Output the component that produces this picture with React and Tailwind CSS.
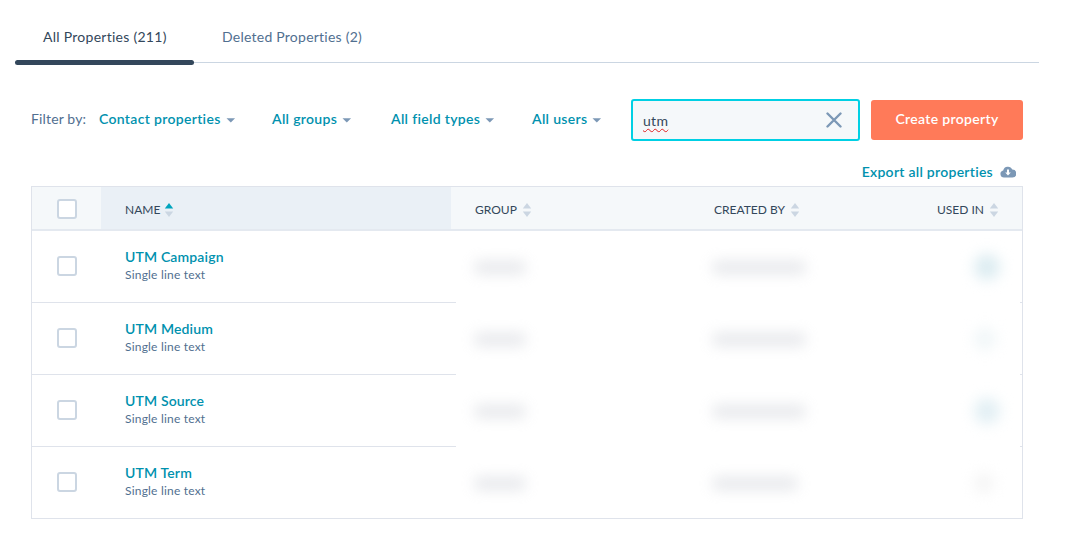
function Caret() {
  return (
    <svg width="10" height="5" viewBox="0 0 10 5" className="ml-[5px] mt-[3px] shrink-0">
      <path d="M0.5 0.2h8.6L4.8 4.6z" fill="#7c98b6" />
    </svg>
  );
}

function Sort({ active }) {
  return (
    <svg width="10" height="16" viewBox="0 0 10 16" className="shrink-0">
      <path d="M5 1l4.2 5.5H.8z" fill={active ? "#00a4bd" : "#cbd6e2"} />
      <path d="M5 15L.8 9.5h8.4z" fill="#cbd6e2" />
    </svg>
  );
}

function Check() {
  return <div className="w-5 h-5 rounded-[3px] border-2 border-[#cbd6e2] bg-white shrink-0 mb-px" />;
}

function Filter({ label, className }) {
  return (
    <div className={"flex items-center text-[14px] font-semibold tracking-[0.32px] text-[#0091ae] pb-[3px] " + className}>
      <span>{label}</span>
      <Caret />
    </div>
  );
}

function Row({ name, creatorW, usedColor, usedSize, last }) {
  return (
    <div className="flex h-[72px]">
      <div className={"w-[424px] shrink-0 flex items-center border-b " + (last ? "border-transparent" : "border-[#dfe3eb]")}>
        <div className="w-[70px] pl-[25px]"><Check /></div>
        <div className="pl-[23px] pb-[3px]">
          <div className="text-[14px] leading-[20px] font-semibold tracking-[0.15px] text-[#0091ae]">{name}</div>
          <div className="text-[12px] leading-[16px] tracking-[0.2px] text-[#516f90]">Single line text</div>
        </div>
      </div>
      <div className="flex-1 flex items-center">
        <div className="w-[257px] pl-[19px]">
          <div className="w-[50px] h-[13px] bg-[#c9ccd4] opacity-45 blur-[7px]" />
        </div>
        <div className="flex-1"><div className="h-[13px] bg-[#c9ccd4] opacity-45 blur-[7px]" style={{ width: creatorW }} /></div>
        <div className="w-[46px] flex">
          <div className="rounded-full blur-[7px]" style={{ width: usedSize, height: usedSize, background: usedColor }} />
        </div>
      </div>
      <div className={"w-[2px] shrink-0 border-b " + (last ? "border-transparent" : "border-[#dfe3eb]")} />
    </div>
  );
}

export default function App() {
  return (
    <div className="w-[1068px] h-[552px] bg-white overflow-hidden text-[#33475b] font-['Lato','Open_Sans',sans-serif]">
      <div className="pl-[15px] w-[1039px] pt-[27px]">
        <div className="flex h-[36px] border-b border-[#cbd6e2] relative">
          <div className="w-[179px] pl-[28px] text-[14px] leading-[20px] tracking-[0.27px] text-[#33475b]">All Properties (211)</div>
          <div className="pl-[28px] text-[14px] leading-[20px] tracking-[0.24px] text-[#516f90]">Deleted Properties (2)</div>
          <div className="absolute left-0 -bottom-[3px] w-[179px] h-[5px] rounded-[3px] bg-[#33475b]" />
        </div>
      </div>

      <div className="flex items-center pl-[31px] mt-[36px] h-[42px]">
        <span className="text-[14px] tracking-[0.15px] text-[#516f90] w-[68px] pb-[3px]">Filter by:</span>
        <Filter label="Contact properties" className="w-[173px]" />
        <Filter label="All groups" className="w-[119px]" />
        <Filter label="All field types" className="w-[141px]" />
        <Filter label="All users" className="w-[99px]" />
        <div className="w-[229px] h-[42px] rounded-[3px] border-2 border-[#00d0e4] bg-[#f5f8fa] flex items-center pl-[10px] pr-[16px] justify-between">
          <span className="text-[14px] tracking-[0.3px] text-[#33475b] underline decoration-wavy decoration-[#e02020] decoration-1 underline-offset-2">utm</span>
          <svg width="16" height="16" viewBox="0 0 16 16"><path d="M1.5 1.5l13 13M14.5 1.5l-13 13" stroke="#7c98b6" strokeWidth="2.4" strokeLinecap="round" /></svg>
        </div>
        <div className="ml-[11px] w-[152px] h-10 rounded-[3px] bg-[#ff7a59] text-white text-[14px] font-semibold tracking-[0.32px] flex items-center justify-center pb-[3px]">Create property</div>
      </div>

      <div className="w-[1016px] flex justify-end items-center h-5 mt-[20px] text-[14px] font-semibold tracking-[0.27px] text-[#0091ae]">
        <span>Export all properties</span>
        <svg width="16" height="13" viewBox="0 0 16 13" className="ml-[7px]">
          <path fillRule="evenodd" d="M4 12.5A3.6 3.6 0 0 1 3.2 5.4 4.8 4.8 0 0 1 12.3 4.6 3.9 3.9 0 0 1 12.4 12.5zM7 4.5v3H5.2L8 10.4l2.8-2.9H9v-3z" fill="#7c98b6" />
        </svg>
      </div>

      <div className="ml-[31px] mt-[5px] w-[992px] h-[333px] border border-[#dfe3eb]">
        <div className="flex h-[44px] bg-[#f5f8fa] border-b-2 border-[#e4e9f0] text-[12px] text-[#33475b]">
          <div className="w-[69px] flex items-center pl-[25px] pt-[3px]"><Check /></div>
          <div className="w-[350px] bg-[#eaf0f6] flex items-center pl-[24px] gap-[4px] pt-[3px]">
            <span>NAME</span><Sort active />
          </div>
          <div className="w-[239px] flex items-center pl-[24px] gap-[5px] pt-[3px]"><span>GROUP</span><Sort /></div>
          <div className="w-[223px] flex items-center pl-[24px] gap-[5px] pt-[3px]"><span>CREATED BY</span><Sort /></div>
          <div className="flex items-center gap-[5px] pl-[24px] pt-[3px]"><span>USED IN</span><Sort /></div>
        </div>
        <Row name="UTM Campaign" creatorW={92} usedColor="#dcecf1" usedSize={26} />
        <Row name="UTM Medium" creatorW={92} usedColor="#f0f6f8" usedSize={22} />
        <Row name="UTM Source" creatorW={92} usedColor="#e2eff4" usedSize={26} />
        <Row name="UTM Term" creatorW={84} usedColor="#f4f4f4" usedSize={20} last />
      </div>
    </div>
  );
}
